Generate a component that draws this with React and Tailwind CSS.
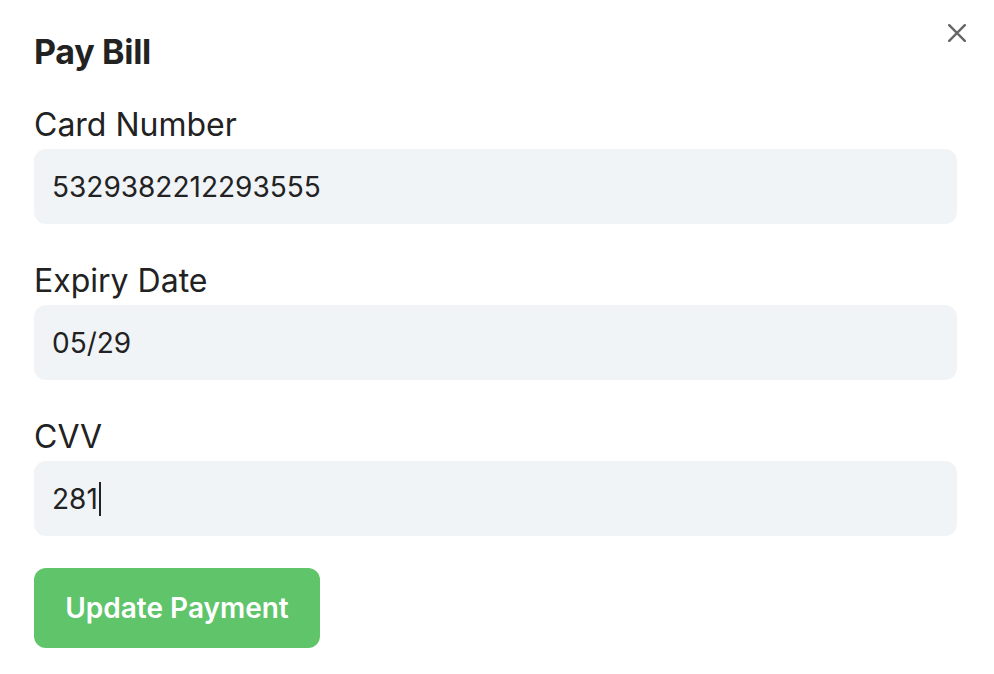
import React from 'react';

const fields = [
  { label: 'Card Number', value: '5329382212293555' },
  { label: 'Expiry Date', value: '05/29' },
  { label: 'CVV', value: '281', focused: true },
];

function Field({ label, value, focused }) {
  return (
    <div className="flex flex-col gap-[8px]">
      <label className="text-[32px] leading-none text-[#222222]">{label}</label>
      <div className="h-[75px] w-full rounded-[12px] bg-[#f1f4f7] px-[18px] flex items-center text-[28px] text-[#222222]">
        <span>{value}</span>
        {focused && <span className="ml-[1px] w-[2px] h-[34px] bg-[#222222]" />}
      </div>
    </div>
  );
}

export default function App() {
  return (
    <div
      className="relative w-[994px] h-[674px] bg-white pl-[34px] pr-[37px] pt-[35px]"
      style={{ fontFamily: 'Inter, "Noto Sans", sans-serif' }}
    >
      {/* Close */}
      <button className="absolute top-[24px] left-[948px] w-[18px] h-[18px] text-[#666666]">
        <svg viewBox="0 0 18 18" width="18" height="18" fill="none" stroke="currentColor" strokeWidth="2.4" strokeLinecap="round">
          <path d="M1.2 1.2L16.8 16.8M16.8 1.2L1.2 16.8" />
        </svg>
      </button>

      <h1 className="text-[34px] leading-none font-bold tracking-[-0.3px] text-[#222222]">Pay Bill</h1>

      <div className="mt-[40px] flex flex-col gap-[41px]">
        {fields.map((f) => (
          <Field key={f.label} {...f} />
        ))}
      </div>

      <button className="mt-[32px] h-[80px] w-[286px] rounded-[12px] bg-[#5fc46a] text-white text-[28px] font-semibold">
        Update Payment
      </button>
    </div>
  );
}
